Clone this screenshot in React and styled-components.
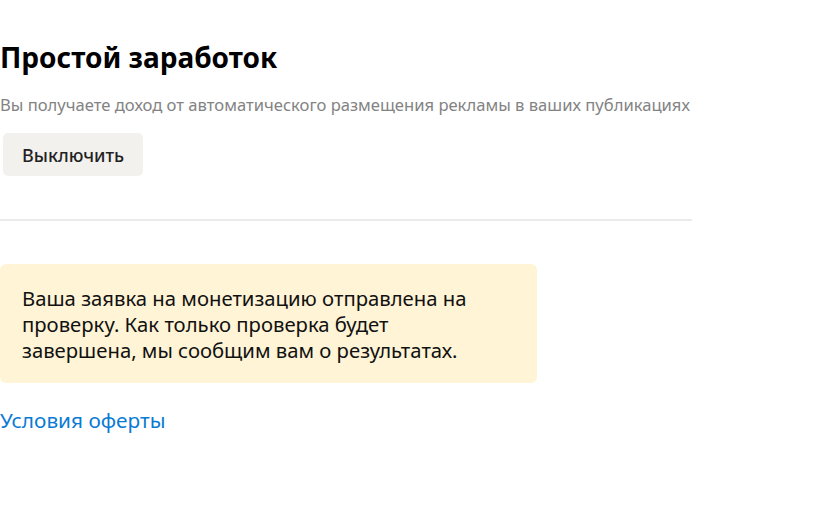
import React from "react";
import styled, { createGlobalStyle } from "styled-components";

const GlobalStyle = createGlobalStyle`
    body {
        margin: 0;
        background: #fff;
        font-family: "Noto Sans", "Open Sans", sans-serif;
        color: #000;
    }
`;

const Page = styled.div`
    width: 692px;
    padding-top: 40px;
`;

const Title = styled.h1`
    margin: 0;
    font-size: 28px;
    line-height: 34px;
    font-weight: 700;
`;

const Subtitle = styled.p`
    margin: 20px 0 0;
    font-size: 16.6px;
    line-height: 22px;
    color: #838383;
    white-space: nowrap;
`;

const Button = styled.button`
    display: block;
    margin: 17px 0 0 3px;
    height: 43px;
    padding: 0 19px;
    border: none;
    border-radius: 5px;
    background: #f2f1ee;
    font-family: inherit;
    font-size: 18px;
    font-weight: 500;
    color: #222;
`;

const Divider = styled.hr`
    margin: 43px 0 0;
    border: none;
    height: 2px;
    background: #ebebeb;
`;

const Notice = styled.div`
    margin-top: 43px;
    width: 537px;
    box-sizing: border-box;
    padding: 21px 22px 20px;
    border-radius: 6px;
    background: #fff4d6;
    font-size: 20.3px;
    line-height: 26px;
    color: #111;
`;

const NoticeText = styled.p`
    margin: 0;
    max-width: 476px;
`;

const OfferLink = styled.a`
    display: inline-block;
    margin-top: 24px;
    font-size: 20.8px;
    line-height: 26px;
    color: #0a7bd4;
    text-decoration: none;
`;

export default function App() {
    return (
        <>
            <GlobalStyle />
            <Page>
                <Title>Простой заработок</Title>
                <Subtitle>Вы получаете доход от автоматического размещения рекламы в ваших публикациях</Subtitle>
                <Button>Выключить</Button>
                <Divider />
                <Notice>
                    <NoticeText>
                        Ваша заявка на монетизацию отправлена на проверку. Как только проверка будет
                        завершена, мы сообщим вам о результатах.
                    </NoticeText>
                </Notice>
                <OfferLink href="#">Условия оферты</OfferLink>
            </Page>
        </>
    );
}
